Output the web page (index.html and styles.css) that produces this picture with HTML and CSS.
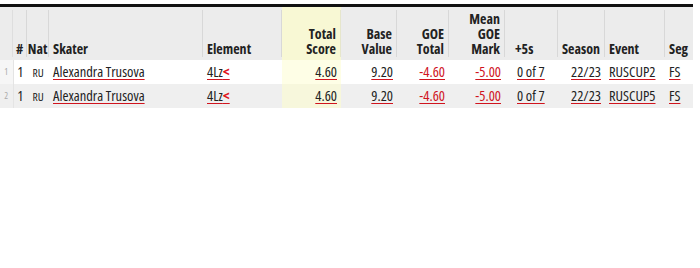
FILE: index.html
```html
<!DOCTYPE html>
<html>
<head>
<meta charset="utf-8">
<link rel="stylesheet" href="styles.css">
</head>
<body>
<div class="wrap">
<table class="scores">
  <colgroup>
    <col class="c-rn"><col class="c-no"><col class="c-nat"><col class="c-sk"><col class="c-el"><col class="c-ts"><col class="c-bv"><col class="c-goe"><col class="c-mean"><col class="c-p5"><col class="c-se"><col class="c-ev"><col class="c-sg">
  </colgroup>
  <thead>
    <tr>
      <th class="rn"><div class="h"></div></th>
      <th><div class="h ctr">#</div></th>
      <th><div class="h ctr">Nat</div></th>
      <th><div class="h lft">Skater</div></th>
      <th><div class="h lft">Element</div></th>
      <th class="hl"><div class="h">Total<br>Score</div></th>
      <th><div class="h">Base<br>Value</div></th>
      <th><div class="h">GOE<br>Total</div></th>
      <th><div class="h">Mean<br>GOE<br>Mark</div></th>
      <th><div class="h lft p5">+5s</div></th>
      <th><div class="h">Season</div></th>
      <th><div class="h lft">Event</div></th>
      <th><div class="h lft last">Seg</div></th>
    </tr>
  </thead>
  <tbody>
    <tr>
      <td class="rn">1</td>
      <td class="ctr">1</td>
      <td class="ctr nat">RU</td>
      <td class="lft"><a>Alexandra Trusova</a></td>
      <td class="lft"><a>4Lz<b class="ur">&lt;</b></a></td>
      <td class="hl num"><a>4.60</a></td>
      <td class="num"><a>9.20</a></td>
      <td class="num"><a class="neg">-4.60</a></td>
      <td class="num"><a class="neg">-5.00</a></td>
      <td class="lft p5v"><a>0 of 7</a></td>
      <td class="num"><a>22/23</a></td>
      <td class="lft"><a>RUSCUP2</a></td>
      <td class="lft"><a>FS</a></td>
    </tr>
    <tr class="alt">
      <td class="rn">2</td>
      <td class="ctr">1</td>
      <td class="ctr nat">RU</td>
      <td class="lft"><a>Alexandra Trusova</a></td>
      <td class="lft"><a>4Lz<b class="ur">&lt;</b></a></td>
      <td class="hl num"><a>4.60</a></td>
      <td class="num"><a>9.20</a></td>
      <td class="num"><a class="neg">-4.60</a></td>
      <td class="num"><a class="neg">-5.00</a></td>
      <td class="lft p5v"><a>0 of 7</a></td>
      <td class="num"><a>22/23</a></td>
      <td class="lft"><a>RUSCUP5</a></td>
      <td class="lft"><a>FS</a></td>
    </tr>
  </tbody>
</table>
</div>
</body>
</html>
```
FILE: styles.css
```css
html, body {
  margin: 0;
  padding: 0;
  background: #fff;
}
.wrap {
  padding-top: 4px;
}
.scores {
  width: 693px;
  border-collapse: collapse;
  table-layout: fixed;
  border-top: 3px solid #111;
  font-family: "Open Sans", "Liberation Sans", sans-serif;
  font-stretch: 75%;
  color: #222;
}
.c-rn { width: 13px; }
.c-no { width: 14px; }
.c-nat { width: 22px; }
.c-sk { width: 154px; }
.c-el { width: 79px; }
.c-ts { width: 59px; }
.c-bv { width: 56px; }
.c-goe { width: 52px; }
.c-mean { width: 56px; }
.c-p5 { width: 53px; }
.c-se { width: 47px; }
.c-ev { width: 60px; }
.c-sg { width: 28px; }

thead th {
  background: #ececec;
  padding: 3px 0 3px 0;
  font-size: 14px;
  font-weight: bold;
  line-height: 15px;
  vertical-align: bottom;
}
thead th.hl { background: #f8f8d4; }
.h {
  height: 47px;
  box-sizing: border-box;
  padding: 0 4px 1px 0;
  border-right: 1px solid #d8d8d8;
  display: flex;
  flex-direction: column;
  justify-content: flex-end;
  text-align: right;
}
.h.lft { text-align: left; padding-left: 4px; padding-right: 0; }
.h.ctr { text-align: center; padding-left: 0; padding-right: 0; }
.h.last { border-right: none; }
.h.p5 { padding-left: 10px; }
th.hl .h { border-right-color: #e6e6cc; }
th.rn .h { border-right-color: #dedede; }

tbody td {
  height: 24px;
  padding: 0 4px 0 0;
  font-size: 14.5px;
  line-height: 20px;
  white-space: nowrap;
  overflow: hidden;
  background: #fff;
  text-align: right;
  vertical-align: middle;
}
tbody tr.alt td { background: #efefef; }
tbody td.hl { background: #fefee6; }
tbody tr.alt td.hl { background: #f7f7dc; }
tbody td.rn {
  font-size: 9px;
  color: #aaa;
  text-align: center;
  padding: 0;
  background: #f6f6f6;
  border-right: 1px solid #e4e4e4;
}
tbody tr.alt td.rn { background: #efefef; }
tbody td.ctr { text-align: center; padding: 0; }
tbody td.lft { text-align: left; padding: 0 0 0 4px; }
tbody td.p5v { padding-left: 12px; }
tbody td.nat { font-size: 11.5px; line-height: 22px; vertical-align: bottom; }
a {
  color: #222;
  text-decoration: underline;
  text-decoration-color: #d0141e;
  text-underline-offset: 2px;
}
a.neg { color: #d0141e; }
.ur { color: #e0141e; font-weight: bold; }
```
